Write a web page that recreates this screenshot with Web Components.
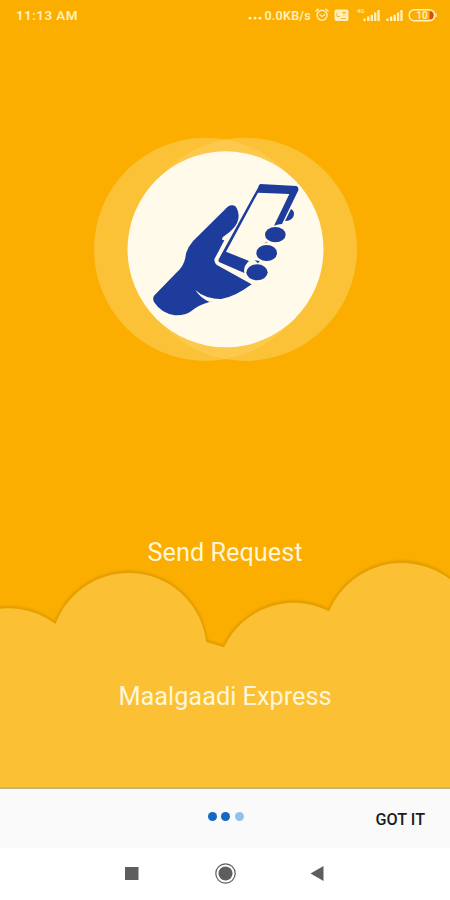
<!DOCTYPE html>
<html lang="en">
  <head>
    <meta charset="UTF-8" />
    <meta name="viewport" content="width=device-width, initial-scale=1.0" />
    <title>Maalgaadi Express</title>
    <style>
      body {
        margin: 0;
        background: #fff;
        font-family: Roboto, "Liberation Sans", sans-serif;
      }
    </style>
    <script type="module">
      function render(host, html) {
        const template = document.createElement("template");
        template.innerHTML = html;
        host
          .attachShadow({ mode: "open" })
          .appendChild(template.content.cloneNode(true));
      }

      class StatusBar extends HTMLElement {
        constructor() {
          super();
          render(
            this,
            `
        <style>
          :host {
            display: flex;
            align-items: center;
            justify-content: space-between;
            height: 30px;
            padding: 0 13px 0 16px;
            box-sizing: border-box;
            color: #fff0bd;
            font-size: 12.5px;
            font-weight: 600;
          }
          .time {
            font-size: 13.5px;
            letter-spacing: 0.4px;
          }
          .rate {
            letter-spacing: 0.25px;
          }
          .right {
            display: flex;
            align-items: center;
          }
          .dots {
            width: 16px;
            height: 12px;
          }
          .icons {
            margin-left: 3px;
          }
          svg {
            display: block;
          }
        </style>
        <span class="time">11:13 AM</span>
        <div class="right">
          <svg class="dots" viewBox="0 0 16 12" fill="currentColor">
            <circle cx="2" cy="9.2" r="1.4" /><circle cx="7" cy="9.2" r="1.4" /><circle cx="12" cy="9.2" r="1.4" />
          </svg>
          <span class="rate">0.0KB/s</span>
          <svg class="icons" width="123" height="18" viewBox="0 0 123 18" fill="none" stroke="currentColor">
            <!-- alarm -->
            <circle cx="8" cy="9.3" r="5" stroke-width="1.4" />
            <path d="M1.5 5.5 4.5 2.8M14.5 5.5 11.5 2.8M5.5 8.5 8 10.5 11 8.5" stroke-width="1.4" />
            <!-- volte -->
            <rect x="20.5" y="3.5" width="14" height="11.5" rx="2" fill="currentColor" stroke="none" />
            <path d="M23 6.5v4h3M28 6.5h4M30 6.5v3M27 12.5h5" stroke="#f7b633" stroke-width="1" />
            <!-- signal 1 -->
            <path d="M50.5 15v-2.5M54.3 15v-4.5M57.8 15V8.8M61.2 15V6.5M64.6 15V4" stroke-width="2.3" />
            <text x="43" y="7" font-size="6" fill="currentColor" stroke="none">4G</text>
            <!-- signal 2 -->
            <path d="M73.5 15v-2.5M77.2 15v-4.5M80.7 15V8.8M84.1 15V6.5M87.5 15V4" stroke-width="2.3" />
            <!-- battery -->
            <rect x="95.2" y="3.8" width="25.5" height="11" rx="5" stroke-width="1.4" />
            <path d="M115.5 5.5h2q2 1 2 3.8t-2 3.8h-2z" fill="#dc481c" stroke="none" />
            <path d="M122 7.5v3.6" stroke-width="1.4" />
            <text x="108" y="12.7" text-anchor="middle" font-size="10" fill="currentColor" stroke="none">10</text>
          </svg>
        </div>
      `,
          );
        }
      }

      class HandPhoneArt extends HTMLElement {
        constructor() {
          super();
          render(
            this,
            `
        <style>
          :host {
            display: block;
            width: 280px;
            height: 240px;
          }
          svg {
            display: block;
          }
        </style>
        <svg width="280" height="240" viewBox="0 0 840 720">
          <circle cx="362" cy="358" r="335" fill="#fbc137" />
          <circle cx="481" cy="358" r="335" fill="#fbc137" />
          <!-- where the two halos overlap -->
          <path d="M421.5 28.3A335 335 0 0 1 421.5 687.7A335 335 0 0 1 421.5 28.3" fill="#fcc94d" />
          <circle cx="421.5" cy="358" r="294" fill="#fffaea" />
          <g fill="#1d3c9c">
            <!-- palm, thumb and wrist -->
            <path d="M440 226Q451 225 456 236Q464 254 459 270Q456 287 433 307L413 322L411 329L418 331L388 388Q388 400 397 406L500 463Q448 502 408 507Q390 511 373 516Q340 525 318 544Q302 557 270 556Q229 550 207 516Q202 505 207 497L285 417Q301 398 303 370Q309 350 325 332L419 239Q431 226 440 226Z" />
            <!-- crease at the base of the thumb -->
            <path d="M331 480Q358 506 412 508Q392 515 374 516Q347 505 331 480Z" fill="#fffaea" />
            <!-- fourth finger behind the phone -->
            <path d="M618 237Q630 243 626 258Q620 273 600 273Z" />
            <!-- phone frame -->
            <path fill-rule="evenodd" d="M526 162L634 168Q642 171 640 181L591 282Q580 282 567 287L613 192L519 188L423 365L492 393Q474 409 478 429L402 396Q399 391 402 386L519 173Q521 164 526 162Z" />
            <path d="M509 391l15 2-5 7z" />
            <ellipse cx="571" cy="314" rx="31" ry="23" />
            <ellipse cx="545" cy="369" rx="31" ry="24" />
            <ellipse cx="516" cy="427" rx="32" ry="24" />
            <path d="M537 340l7-6 5 6z" fill="#b9bac4" />
          </g>
        </svg>
      `,
          );
        }
      }

      class CloudPanel extends HTMLElement {
        constructor() {
          super();
          render(
            this,
            `
        <style>
          :host {
            display: grid;
            height: 237px;
            color: #fff6da;
            font-size: 25.3px;
            line-height: 30px;
          }
          svg,
          .label {
            grid-area: 1 / 1;
          }
          svg {
            display: block;
          }
          .label {
            justify-self: center;
            padding-top: 132px;
            z-index: 1;
          }
        </style>
        <svg width="450" height="237" viewBox="0 550 450 237">
          <defs>
            <filter id="edge" x="-5%" y="-5%" width="110%" height="110%">
              <feGaussianBlur stdDeviation="0.9" />
            </filter>
            <path id="cloud" d="M-20 613.2A78 78 0 0 1 55.5 623.5A78 78 0 0 1 206.2 641.5L224 646.8A77 77 0 0 1 329 610.8A79 79 0 0 1 460 588V800H-20Z" />
          </defs>
          <use href="#cloud" y="-0.5" fill="none" stroke="#dc9a00" stroke-width="2.6" filter="url(#edge)" />
          <use href="#cloud" y="0.5" fill="#fbc034" />
        </svg>
        <div class="label"><slot></slot></div>
      `,
          );
        }
      }

      class IntroSlide extends HTMLElement {
        constructor() {
          super();
          render(
            this,
            `
        <style>
          :host {
            display: flex;
            flex-direction: column;
            height: 787px;
            background: #fbae00;
            color: #fff5d9;
          }
          .art {
            align-self: center;
            padding-top: 100px;
          }
          .title {
            padding-top: 168px;
            font-size: 25.3px;
            line-height: 30px;
            text-align: center;
          }
          .clouds {
            margin-top: -18px;
          }
        </style>
        <slot name="status"></slot>
        <div class="art"><slot name="art"></slot></div>
        <div class="title"><slot name="title"></slot></div>
        <div class="clouds"><slot name="clouds"></slot></div>
      `,
          );
        }
      }

      class PagerBar extends HTMLElement {
        constructor() {
          super();
          render(
            this,
            `
        <style>
          :host {
            display: grid;
            grid-template-columns: 1fr auto 1fr;
            height: 61px;
            box-sizing: border-box;
            border-top: 2px solid #c2b583;
            background: #fafafa;
          }
          .dots {
            grid-column: 2;
            display: flex;
            gap: 4.5px;
            padding: 23px 0 0 1px;
          }
          .dots i {
            width: 9px;
            height: 9px;
            border-radius: 50%;
            background: #1268c4;
          }
          .dots i:last-child {
            background: #92c1ef;
          }
          button {
            all: unset;
            justify-self: end;
            align-self: start;
            padding: 21px 25px 0 0;
            color: #1c1c1c;
            font-size: 16.2px;
            line-height: 20px;
            font-weight: 500;
          }
        </style>
        <div class="dots"><i></i><i></i><i></i></div>
        <button><slot></slot></button>
      `,
          );
        }
      }

      class NavBar extends HTMLElement {
        constructor() {
          super();
          render(
            this,
            `
        <style>
          :host {
            display: flex;
            justify-content: center;
            align-items: center;
            gap: 74px;
            height: 52px;
            background: #fff;
          }
        </style>
        <svg width="16" height="22" viewBox="0 0 16 22"><rect x="1" y="4" width="13.5" height="13" fill="#5e5e5e" /></svg>
        <svg width="22" height="22" viewBox="0 0 22 22">
          <circle cx="11.5" cy="10.5" r="9.7" fill="none" stroke="#5e5e5e" stroke-width="1.2" />
          <circle cx="11.5" cy="10.5" r="7" fill="#5e5e5e" />
        </svg>
        <svg width="16" height="22" viewBox="0 0 16 22"><path d="M0.5 10.5 13.5 3v15z" fill="#5e5e5e" /></svg>
      `,
          );
        }
      }

      customElements.define("status-bar", StatusBar);
      customElements.define("hand-phone-art", HandPhoneArt);
      customElements.define("cloud-panel", CloudPanel);
      customElements.define("intro-slide", IntroSlide);
      customElements.define("pager-bar", PagerBar);
      customElements.define("nav-bar", NavBar);
    </script>
  </head>
  <body>
    <intro-slide>
      <status-bar slot="status"></status-bar>
      <hand-phone-art slot="art"></hand-phone-art>
      <span slot="title">Send Request</span>
      <cloud-panel slot="clouds">Maalgaadi Express</cloud-panel>
    </intro-slide>
    <pager-bar>GOT IT</pager-bar>
    <nav-bar></nav-bar>
  </body>
</html>
